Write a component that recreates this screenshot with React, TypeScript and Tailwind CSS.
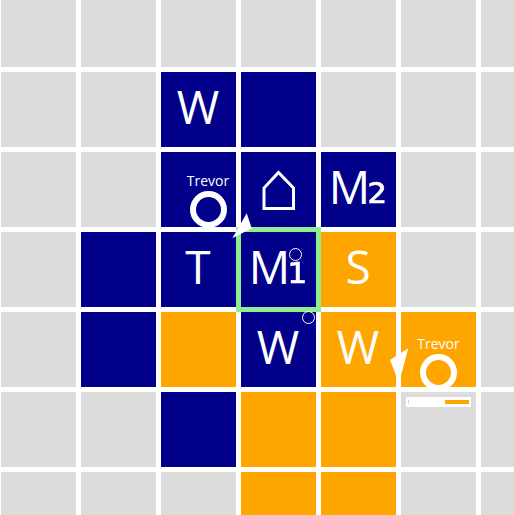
import React from 'react';

type Tile = {
  bg?: 'navy' | 'orange';
  label?: string;
  sub?: string;
  house?: boolean;
  selected?: boolean;
  dot?: 'label' | 'corner';
  trevor?: 'center' | 'right';
  bar?: boolean;
};

const board: Tile[][] = [
  [{}, {}, {}, {}, {}, {}, {}],
  [{}, {}, { bg: 'navy', label: 'W' }, { bg: 'navy' }, {}, {}, {}],
  [{}, {}, { bg: 'navy', trevor: 'center' }, { bg: 'navy', house: true }, { bg: 'navy', label: 'M', sub: '₂' }, {}, {}],
  [{}, { bg: 'navy' }, { bg: 'navy', label: 'T' }, { bg: 'navy', label: 'M', sub: '₁', selected: true, dot: 'label' }, { bg: 'orange', label: 'S' }, {}, {}],
  [{}, { bg: 'navy' }, { bg: 'orange' }, { bg: 'navy', label: 'W', dot: 'corner' }, { bg: 'orange', label: 'W' }, { bg: 'orange', trevor: 'right' }, {}],
  [{}, {}, { bg: 'navy' }, { bg: 'orange' }, { bg: 'orange' }, { bar: true }, {}],
  [{}, {}, {}, { bg: 'orange' }, { bg: 'orange' }, {}, {}],
];

function TileCell({ tile }: { tile: Tile }) {
  const color = tile.bg === 'navy' ? 'bg-[#00008b]' : tile.bg === 'orange' ? 'bg-[#ffa500]' : 'bg-[#dcdcdc]';
  return (
    <div className={`relative h-[75px] w-[75px] ${color}`}>
      {tile.label && (
        <div className="flex h-full items-center justify-center pb-[7px] text-[46px] leading-none text-white">
          <span className={tile.sub ? 'tracking-[-3px]' : ''}>{tile.label}</span>
          {tile.sub && <span className="font-['DejaVu_Sans',sans-serif] text-[50px] leading-none [-webkit-text-stroke:0.4px_white]">{tile.sub}</span>}
        </div>
      )}
      {tile.house && (
        <svg className="absolute inset-0" width="75" height="75" viewBox="0 0 75 75" fill="none" stroke="white" strokeWidth="3">
          <path d="M23 56.500V36L37.500 20.500L52.500 36V56.500Z" />
        </svg>
      )}
      {tile.selected && <div className="absolute -inset-[5px] border-[5px] border-[#90ee90]" />}
      {tile.trevor && (
        <div className={`absolute flex w-[50px] flex-col items-center ${tile.trevor === 'center' ? 'top-[22px] left-[22.500px]' : 'top-[25px] left-[13px]'}`}>
          <span className="text-[14px] leading-[14px] text-white">Trevor</span>
          <div className="mt-[3px] h-[37px] w-[37px] rounded-full border-[6px] border-white" />
        </div>
      )}
      {tile.dot && (
        <div className={`absolute z-10 h-[13px] w-[13px] rounded-full border border-white ${tile.dot === 'label' ? 'top-[16px] left-[48px]' : 'top-[-1px] left-[61px]'}`} />
      )}
      {tile.bar && (
        <div className="absolute top-[5px] left-[5.500px] flex h-[10px] w-[65px] items-center justify-between bg-white px-[2px]">
          <div className="h-[4px] w-px bg-[#ffa500]/50" />
          <div className="h-[4px] w-[24px] bg-[#ffa500]" />
        </div>
      )}
    </div>
  );
}

export default function App() {
  return (
    <div className="relative h-[515px] w-[514px] overflow-hidden bg-white font-['Open_Sans',sans-serif]">
      <div className="mt-[-8px] ml-[0.5px] grid w-max grid-cols-[repeat(7,75px)] gap-[5px]">
        {board.flatMap((row, r) => row.map((tile, c) => <TileCell key={`${r}-${c}`} tile={tile} />))}
      </div>
      <svg className="absolute inset-0" width="514" height="515" viewBox="0 0 514 515" fill="white">
        <path d="M232.300 238.300L246.700 213.300L251.700 228.300Z" />
        <path d="M390 360L408.300 348.300L399 383Z" />
      </svg>
    </div>
  );
}
